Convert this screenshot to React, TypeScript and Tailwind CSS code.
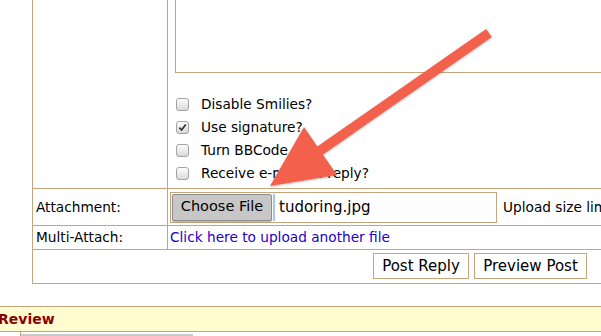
import { ReactNode } from "react";

const options = [
  { label: "Disable Smilies?", checked: false },
  { label: "Use signature?", checked: true },
  { label: "Turn BBCode off?", checked: false },
  { label: "Receive e-mail on reply?", checked: false },
];

function Checkbox({ checked }: { checked: boolean }) {
  return (
    <span className="ml-[1px] mr-[12px] flex h-[13px] w-[13px] shrink-0 items-center justify-center rounded-[3px] border border-[#a3a3a3] bg-gradient-to-b from-[#fdfdfd] to-[#d9d9d9]">
      {checked && (
        <svg viewBox="0 0 10 10" className="h-[9px] w-[9px]">
          <path d="M1.5 5.2 L4 7.8 L8.6 1.6" fill="none" stroke="#333" strokeWidth="1.9" />
        </svg>
      )}
    </span>
  );
}

function Row({ label, children, className = "" }: { label: string; children: ReactNode; className?: string }) {
  return (
    <div className={`flex border-b border-[#c4a57c] ${className}`}>
      <div className="flex w-[135px] shrink-0 items-center border-r border-[#c4a57c] pl-[3px]">{label}</div>
      <div className="flex min-w-0 flex-1 items-center pl-[2px]">{children}</div>
    </div>
  );
}

export default function App() {
  return (
    <div className="relative h-[336px] w-[601px] overflow-hidden bg-white font-['DejaVu_Sans',Verdana,sans-serif] text-[13.7px] text-black">
      {/* Reply form */}
      <div className="-mt-[20px] ml-[32px] w-[640px] border border-[#c4a57c]">
        <div className="flex border-b border-[#c4a57c]">
          <div className="w-[135px] shrink-0 border-r border-[#c4a57c]" />
          <div className="flex-1 pb-[3px] pl-[7px]">
            <div className="h-[92px] border-x border-b border-[#c4a57c]" />
            <div className="mt-[20px] flex flex-col">
              {options.map((o) => (
                <label key={o.label} className="flex h-[23px] items-center whitespace-nowrap">
                  <Checkbox checked={o.checked} />
                  {o.label}
                </label>
              ))}
            </div>
          </div>
        </div>

        <Row label="Attachment:" className="h-[37px]">
          <div className="flex h-[31px] w-[327px] shrink-0 items-center border border-[#c4a57c]">
            <button className="ml-[1px] h-[27px] w-[100px] rounded-[2px] border border-[#8d8d8d] bg-[#c7c7c7] text-[14.5px] shadow-[0_1px_1px_rgba(0,0,0,0.3)]">
              Choose File
            </button>
            <span className="ml-[1px] h-[27px] w-[2px] bg-[#a9c6ea]" />
            <span className="ml-[4px] text-[15px]">tudoring.jpg</span>
          </div>
          <span className="ml-[6px] whitespace-nowrap">Upload size limit</span>
        </Row>

        <Row label="Multi-Attach:" className="h-[24px]">
          <a className="whitespace-nowrap text-[#2200cc]">Click here to upload another file</a>
        </Row>

        <div className="flex h-[33px] gap-[5px] pl-[340px] pt-[3px]">
          <button className="h-[26px] w-[96px] border border-[#c4a57c] bg-white text-[15px]">Post Reply</button>
          <button className="h-[26px] w-[113px] border border-[#c4a57c] bg-white text-[15px]">Preview Post</button>
        </div>
      </div>

      {/* Review */}
      <div className="mt-[22px] flex h-[26px] items-center border-y border-[#c4a57c] bg-[#fffdd0]">
        <span className="-ml-[2px] text-[14px] font-bold text-[#8b0000]">Review</span>
      </div>
      <div className="flex">
        <div className="h-[6px] w-[21px] border-r border-[#c4a57c]" />
        <div className="mt-[2px] h-[4px] w-[172px] border-t-2 border-[#c9c9c9]" />
      </div>

      {/* Annotation arrow */}
      <svg className="pointer-events-none absolute inset-0 drop-shadow-[0_1px_1px_rgba(0,0,0,0.25)]" width="601" height="336">
        <line x1="489" y1="33" x2="318" y2="152" stroke="#f3614c" strokeWidth="10" />
        <polygon points="270,186 304,127 337,175" fill="#f3614c" />
      </svg>
    </div>
  );
}
